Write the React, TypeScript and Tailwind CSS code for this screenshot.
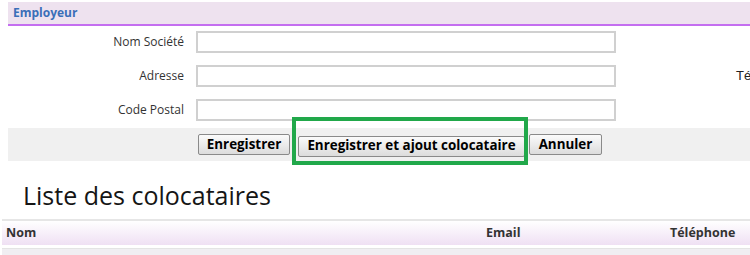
import React from "react";

const fields = [
  { label: "Nom Société", extra: "" },
  { label: "Adresse", extra: "Tél" },
  { label: "Code Postal", extra: "" },
];

const btn =
  "h-[21px] border border-[#8a8a8a] rounded-[2px] bg-gradient-to-b from-[#fbfbfb] to-[#dcdcdc] text-[13.4px] font-bold text-black leading-none whitespace-nowrap";

const App = () => {
  return (
    <div className="w-[750px] h-[255px] overflow-hidden bg-white font-['Open_Sans',sans-serif]">
      <div className="pl-2 pt-[2px]">
        <div className="h-[24px] bg-[#eee2ef] border-b-2 border-[#c46ef0] flex items-center pl-[5px]">
          <span className="text-[12px] font-bold text-[#3a6fb8]">Employeur</span>
        </div>

        <div className="flex flex-col gap-[12px] pt-[5px]">
          {fields.map((f) => (
            <div key={f.label} className="flex items-center h-[22px]">
              <div className="w-[178px] shrink-0 text-right text-[12px] text-[#333] pr-[2px]">
                {f.label}
              </div>
              <div className="w-[10px] shrink-0" />
              <div className="w-[420px] shrink-0 h-[22px] border-2 border-[#d0d0d0] bg-white" />
              {f.extra && (
                <span className="ml-[120px] shrink-0 whitespace-nowrap text-[13px] text-[#222] font-['Liberation_Sans',sans-serif]">
                  {f.extra}
                </span>
              )}
            </div>
          ))}
        </div>

        <div className="mt-[7px] h-[33px] bg-[#f0f0f0] flex items-center pl-[190px] gap-[8px]">
          <button className={`${btn} w-[92px]`}>Enregistrer</button>
          <div className="relative">
            <button className={`${btn} w-[227px]`}>Enregistrer et ajout colocataire</button>
            <div className="absolute left-[-6px] top-[-15px] w-[236px] h-[48px] border-4 border-[#21a84a]" />
          </div>
          <button className={`${btn} w-[73px] -ml-[4px]`}>Annuler</button>
        </div>
      </div>

      <h2 className="pl-[23px] pt-[17px] text-[25px] font-medium leading-[34px] text-[#151515]">
        Liste des colocataires
      </h2>

      <div className="mt-[7px] ml-[2px] border-t-2 border-[#e6e6e6]">
        <div className="h-[24px] bg-gradient-to-b from-white to-[#efe0f3] flex items-center text-[12.5px] font-bold text-[#333]">
          <span className="pl-[4px] w-[484px]">Nom</span>
          <span className="w-[184px]">Email</span>
          <span>Téléphone</span>
        </div>
        <div className="mt-[3px] h-[10px] border-t border-[#e4e4e4] bg-[#f0eef2]" />
      </div>
    </div>
  );
};

export default App;
